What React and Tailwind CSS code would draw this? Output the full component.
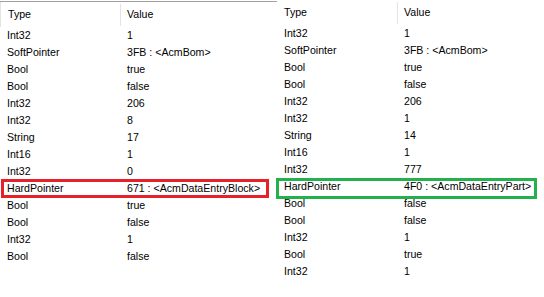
const LEFT_ROWS = [
  ["Int32", "1"],
  ["SoftPointer", "3FB : <AcmBom>"],
  ["Bool", "true"],
  ["Bool", "false"],
  ["Int32", "206"],
  ["Int32", "8"],
  ["String", "17"],
  ["Int16", "1"],
  ["Int32", "0"],
  ["HardPointer", "671 : <AcmDataEntryBlock>"],
  ["Bool", "true"],
  ["Bool", "false"],
  ["Int32", "1"],
  ["Bool", "false"],
];

const RIGHT_ROWS = [
  ["Int32", "1"],
  ["SoftPointer", "3FB : <AcmBom>"],
  ["Bool", "true"],
  ["Bool", "false"],
  ["Int32", "206"],
  ["Int32", "1"],
  ["String", "14"],
  ["Int16", "1"],
  ["Int32", "777"],
  ["HardPointer", "4F0 : <AcmDataEntryPart>"],
  ["Bool", "false"],
  ["Bool", "false"],
  ["Int32", "1"],
  ["Bool", "true"],
  ["Int32", "1"],
];

function Header({ leftLine }) {
  return (
    <div className="flex h-[25px]">
      <div
        className={`w-[120px] flex items-center pl-[7px] ${
          leftLine ? "border-l border-[#e3e3e3] pl-[6px]" : ""
        }`}
      >
        Type
      </div>
      <div className="w-px bg-[#e3e3e3] mt-[2px] mb-[1px]" />
      <div className="flex items-center pl-[6px]">Value</div>
    </div>
  );
}

function Row({ type, value, box }) {
  return (
    <div className="relative flex h-[17px] items-center">
      <div className="w-[120px] pl-[7px]">{type}</div>
      <div className="pl-[7px] whitespace-nowrap">{value}</div>
      {box}
    </div>
  );
}

function Panel({ rows, highlight, box, leftLine, className }) {
  return (
    <div className={className}>
      <Header leftLine={leftLine} />
      {rows.map(([t, v], i) => (
        <Row key={i} type={t} value={v} box={i === highlight ? box : null} />
      ))}
    </div>
  );
}

export default function App() {
  return (
    <div className="w-[544px] h-[297px] bg-white flex overflow-hidden text-black text-[10.6px] font-['Liberation_Sans',Arial,sans-serif]">
      <Panel
        className="w-[277px] mt-px border-t border-[#a0a0a0] self-start"
        rows={LEFT_ROWS}
        highlight={9}
        leftLine
        box={
          <div className="absolute pointer-events-none left-[1px] top-[-1px] w-[268px] h-[19px] border-[3px] border-[#e8202a]" />
        }
      />
      <Panel
        className="flex-1"
        rows={RIGHT_ROWS}
        highlight={9}
        box={
          <div className="absolute pointer-events-none left-[-1px] top-0 w-[261px] h-[21px] border-[3px] border-[#22b14c]" />
        }
      />
    </div>
  );
}
